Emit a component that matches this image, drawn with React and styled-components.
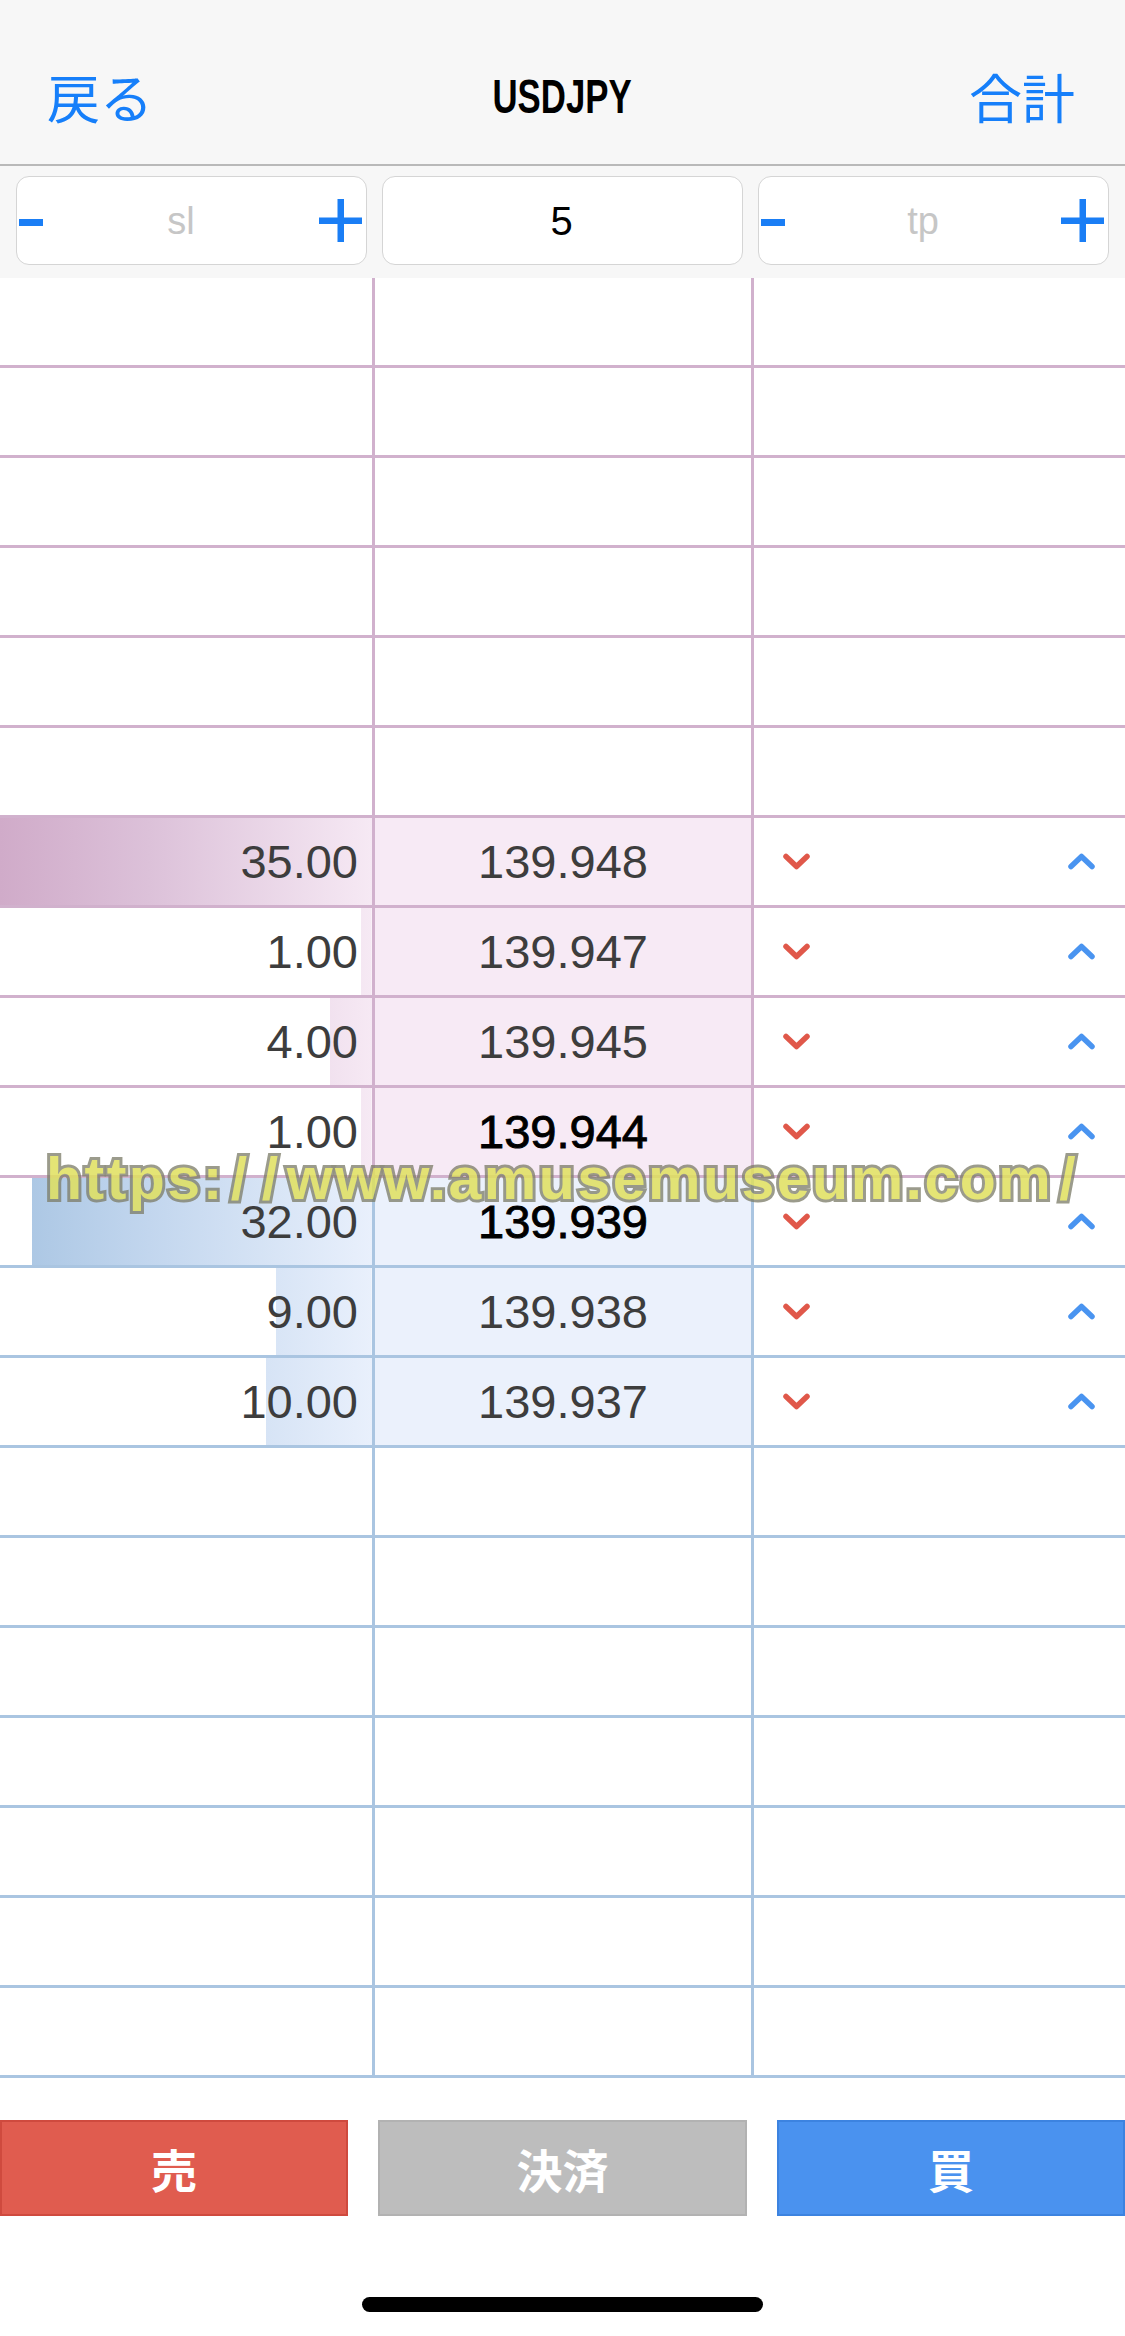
import React from "react";
import styled, { createGlobalStyle, css } from "styled-components";

const GlobalStyle = createGlobalStyle`
  html, body { margin: 0; padding: 0; background: #ffffff; }
  body { font-family: "Liberation Sans", Arial, sans-serif; }
  * { box-sizing: border-box; }
`;

const BLUE = "#167ffa";
const LINE = { ask: "#d1b1cd", bid: "#aac5e1" };
const PRICE_BG = { ask: "#f7eaf5", bid: "#ebf1fc" };
const BAR_BG = {
  ask: "linear-gradient(to right, #d0abc9 0%, #dcc1d9 40%, #f6e9f4 100%)",
  bid: "linear-gradient(to right, #a7c4e2 0%, #c2d6ee 40%, #e9f0fc 100%)",
};

const Page = styled.div`
  position: relative;
  width: 1125px;
  height: 2336px;
  overflow: hidden;
  display: flex;
  flex-direction: column;
  background: #fff;
`;

const NavBar = styled.header`
  height: 166px;
  padding-top: 28px;
  background: #f7f7f7;
  border-bottom: 2px solid #b9b9b9;
  display: grid;
  grid-template-columns: 1fr auto 1fr;
  align-items: center;
`;

const NavButton = styled.span`
  font-family: "Noto Sans CJK JP", sans-serif;
  font-size: 53px;
  line-height: 1;
  color: ${BLUE};
  ${(p) =>
    p.$end
      ? css`justify-self: end; padding-right: 50px;`
      : css`justify-self: start; padding-left: 47px;`}
`;

const Title = styled.h1`
  margin: 0;
  font-family: "Liberation Sans", Arial, sans-serif;
  font-weight: 700;
  font-size: 49px;
  line-height: 1;
  color: #000;
  transform: scaleX(0.71);
`;

const Controls = styled.div`
  height: 112px;
  padding: 10px 16px 13px 16px;
  background: #f7f7f7;
  display: grid;
  grid-template-columns: 351px 361px 351px;
  column-gap: 15px;
`;

const Stepper = styled.div`
  height: 89px;
  background: #fff;
  border: 1.5px solid #d5d5d5;
  border-radius: 13px;
  display: flex;
  align-items: center;
  padding: 0 4px 0 2px;
`;

const Field = styled.span`
  flex: 1;
  text-align: center;
  font-size: ${(p) => (p.$placeholder ? "38px" : "40px")};
  color: ${(p) => (p.$placeholder ? "#c6c6c6" : "#000")};
  line-height: 1;
`;

const IconBtn = styled.span`
  display: flex;
  align-items: center;
  ${(p) => p.$shift && css`margin-top: 4px;`}
`;

const Book = styled.div`
  display: flex;
  flex-direction: column;
`;

const Row = styled.div`
  display: grid;
  grid-template-columns: 375px 379px 1fr;
  height: 90px;
  border-bottom: 3px solid ${(p) => LINE[p.$side]};
`;

const VolCell = styled.div`
  position: relative;
  display: flex;
  align-items: center;
  justify-content: flex-end;
  padding-right: 14px;
  border-right: 3px solid ${(p) => LINE[p.$side]};
`;

const DepthBar = styled.div`
  position: absolute;
  top: 0;
  bottom: 0;
  right: 0;
  background-image: ${(p) => BAR_BG[p.$side]};
  background-size: 372px 100%;
  background-position: right center;
  background-repeat: no-repeat;
`;

const Num = styled.span`
  position: relative;
  font-size: 47px;
  line-height: 1;
  color: ${(p) => (p.$strong ? "#000" : "#3d3d3d")};
  ${(p) => p.$strong && css`-webkit-text-stroke: 0.9px #000;`}
`;

const PriceCell = styled.div`
  display: flex;
  align-items: center;
  justify-content: center;
  background: ${(p) => (p.$filled ? PRICE_BG[p.$side] : "transparent")};
  border-right: 3px solid ${(p) => LINE[p.$side]};
`;

const ArrowCell = styled.div`
  display: flex;
  align-items: center;
  justify-content: space-between;
  padding: 0 30px 0 29px;
`;

const ButtonBar = styled.div`
  margin-top: 42px;
  display: grid;
  grid-template-columns: 348px 1fr 348px;
  column-gap: 30px;
`;

const ACTION = {
  sell: { bg: "#e05c4f", border: "#cf4a3e" },
  close: { bg: "#bdbdbd", border: "#b2b2b2" },
  buy: { bg: "#4a92ef", border: "#3c83e0" },
};

const ActionButton = styled.button`
  height: 96px;
  border: 2px solid ${(p) => ACTION[p.$kind].border};
  background: ${(p) => ACTION[p.$kind].bg};
  color: #fff;
  font-family: "Noto Sans CJK JP", sans-serif;
  font-weight: 700;
  font-size: 46px;
  line-height: 1;
  padding: 0;
  display: flex;
  align-items: center;
  justify-content: center;
`;

const HomeIndicator = styled.div`
  width: 401px;
  height: 15px;
  border-radius: 8px;
  background: #000;
  margin: 81px auto 0;
`;

const Watermark = styled.div`
  position: absolute;
  top: 1150px;
  left: 46px;
  font-family: "Liberation Sans", Arial, sans-serif;
  font-weight: 700;
  font-size: 59px;
  line-height: 58px;
  letter-spacing: 2.5px;
  white-space: nowrap;
  color: #e0e05e;
  -webkit-text-stroke: 6px rgba(125, 125, 105, 0.9);
  paint-order: stroke fill;
  opacity: 0.85;
  pointer-events: none;
`;

const Slash = styled.span`
  margin: 0 6px;
`;

const Minus = () => (
  <svg width="24" height="7" viewBox="0 0 24 7">
    <rect x="0" y="0" width="24" height="7" fill="#1a7ef5" />
  </svg>
);

const Plus = () => (
  <svg width="43" height="43" viewBox="0 0 43 43">
    <rect x="18.5" y="0" width="6.5" height="43" fill="#1a7ef5" />
    <rect x="0" y="18.5" width="43" height="6.5" fill="#1a7ef5" />
  </svg>
);

const ChevronDown = () => (
  <svg width="27" height="17" viewBox="0 0 27 17">
    <polyline
      points="3,3.5 13.5,13.5 24,3.5"
      fill="none"
      stroke="#e0584a"
      strokeWidth="5.5"
      strokeLinecap="round"
      strokeLinejoin="round"
    />
  </svg>
);

const ChevronUp = () => (
  <svg width="27" height="17" viewBox="0 0 27 17">
    <polyline
      points="3,13.5 13.5,3.5 24,13.5"
      fill="none"
      stroke="#4a94f0"
      strokeWidth="5.5"
      strokeLinecap="round"
      strokeLinejoin="round"
    />
  </svg>
);

const StepperBox = ({ label }) => (
  <Stepper>
    <IconBtn $shift>
      <Minus />
    </IconBtn>
    <Field $placeholder>{label}</Field>
    <IconBtn>
      <Plus />
    </IconBtn>
  </Stepper>
);

const MAX_VOL = 35;

const rows = [
  ...Array.from({ length: 6 }, () => ({ side: "ask" })),
  { side: "ask", vol: 35, price: "139.948" },
  { side: "ask", vol: 1, price: "139.947" },
  { side: "ask", vol: 4, price: "139.945" },
  { side: "ask", vol: 1, price: "139.944", best: true },
  { side: "bid", vol: 32, price: "139.939", best: true },
  { side: "bid", vol: 9, price: "139.938" },
  { side: "bid", vol: 10, price: "139.937" },
  ...Array.from({ length: 7 }, () => ({ side: "bid" })),
];

export default function App() {
  return (
    <>
      <GlobalStyle />
      <Page>
        <NavBar>
          <NavButton>戻る</NavButton>
          <Title>USDJPY</Title>
          <NavButton $end>合計</NavButton>
        </NavBar>

        <Controls>
          <StepperBox label="sl" />
          <Stepper>
            <Field>5</Field>
          </Stepper>
          <StepperBox label="tp" />
        </Controls>

        <Book>
          {rows.map((r, i) => {
            const filled = r.vol != null;
            return (
              <Row key={i} $side={r.side}>
                <VolCell $side={r.side}>
                  {filled && (
                    <>
                      <DepthBar
                        $side={r.side}
                        style={{ width: `${(r.vol / MAX_VOL) * 100}%` }}
                      />
                      <Num>{r.vol.toFixed(2)}</Num>
                    </>
                  )}
                </VolCell>
                <PriceCell $side={r.side} $filled={filled}>
                  {filled && <Num $strong={r.best}>{r.price}</Num>}
                </PriceCell>
                <ArrowCell>
                  {filled && (
                    <>
                      <ChevronDown />
                      <ChevronUp />
                    </>
                  )}
                </ArrowCell>
              </Row>
            );
          })}
        </Book>

        <ButtonBar>
          <ActionButton $kind="sell">売</ActionButton>
          <ActionButton $kind="close">決済</ActionButton>
          <ActionButton $kind="buy">買</ActionButton>
        </ButtonBar>

        <HomeIndicator />

        <Watermark>
          https:<Slash>/</Slash>
          <Slash>/</Slash>www.amusemuseum.com<Slash>/</Slash>
        </Watermark>
      </Page>
    </>
  );
}
